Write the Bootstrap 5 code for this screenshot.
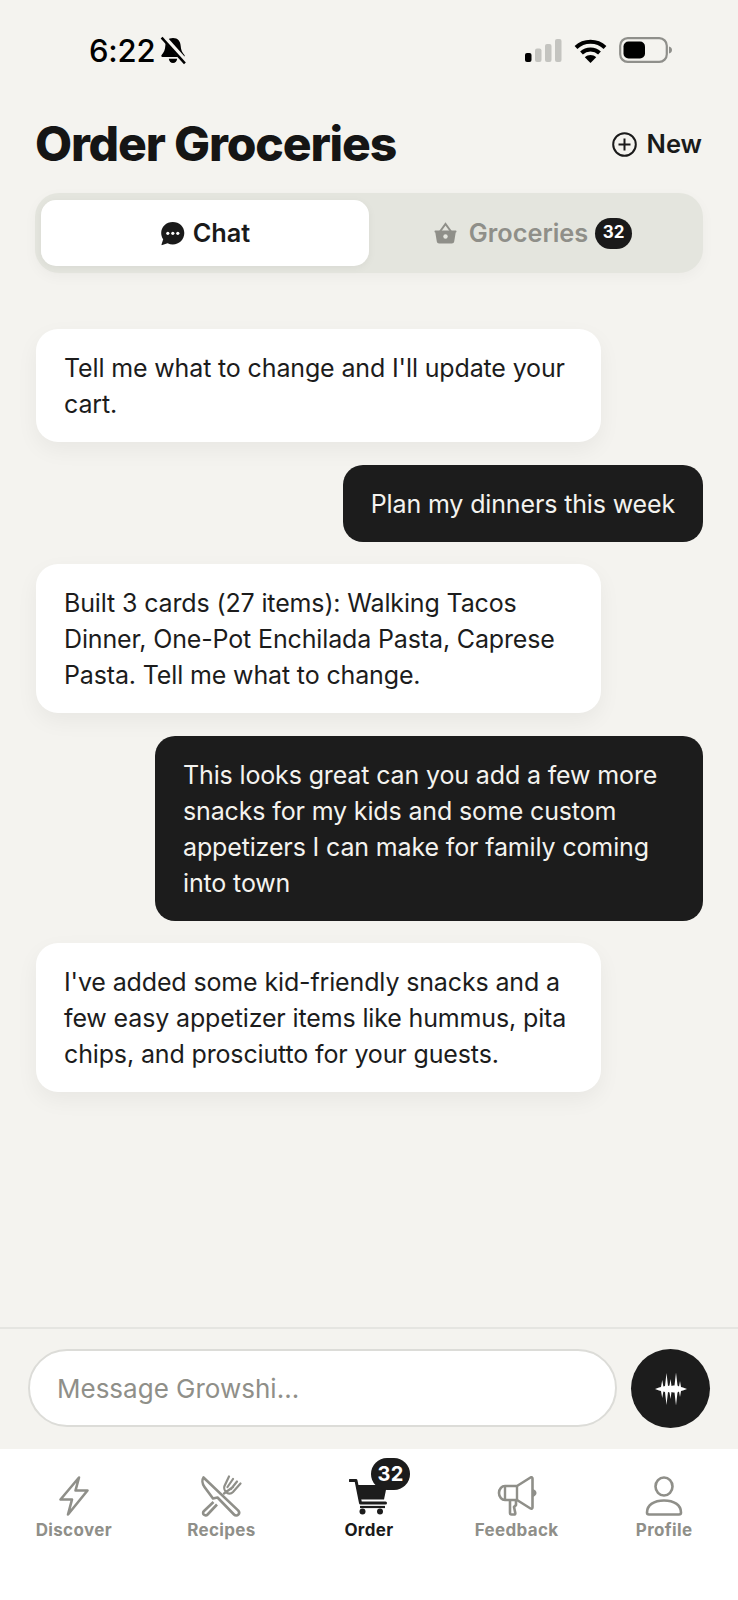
<!DOCTYPE html>
<html lang="en">
<head>
  <meta charset="UTF-8" />
  <meta name="viewport" content="width=device-width, initial-scale=1.0"/>
  <title>Order Groceries</title>
  <link href="https://cdn.jsdelivr.net/npm/bootstrap@5.3.0/dist/css/bootstrap.min.css" rel="stylesheet"/>
  <style>
    body {
      background: #f4f3ef;
      font-family: "Inter", "Liberation Sans", sans-serif;
      color: #1a1a1a;
      overflow: hidden;
    }
    .app-shell { width: 738px; height: 1600px; }

    .status-row { height: 100px; padding: 0 66px 0 89px; }
    .status-time { font-size: 31px; font-weight: 500; letter-spacing: -.2px; color: #000; line-height: 1; }
    .status-right { gap: 12px; }

    .head-row { height: 93px; padding: 0 36px 5px 35px; }
    .head-title { font-size: 48px; font-weight: 800; letter-spacing: -1.15px; margin: 0; color: #151515; }
    .new-btn { font-size: 25.5px; font-weight: 600; color: #1a1a1a; gap: 10px; padding: 0; border: 0; background: none; }

    .seg-wrap {
      margin: 0 35px; height: 80px; padding: 7px 6px;
      background: #e4e5de; border-radius: 24px;
      box-shadow: 0 4px 14px rgba(0,0,0,.035);
    }
    .seg-item { flex: 1 1 50%; font-size: 25.300px; font-weight: 600; gap: 8px; border-radius: 15px; color: #8f8f89; }
    .seg-item.is-on { background: #fff; color: #1a1a1a; box-shadow: 0 2px 8px rgba(0,0,0,.05); }
    .seg-count {
      background: #1a1a1a; color: #fff; font-size: 17px; font-weight: 700;
      min-width: 37px; height: 31px; border-radius: 16px; margin-left: -1px;
    }

    .chat-list { padding: 56px 35px 0 36px; gap: 22.5px; }
    .msg { font-size: 25px; line-height: 36px; letter-spacing: -.14px; }
    .msg-bot { width: 565px; padding: 20.5px 28px; background: #fff; border-radius: 22px; color: #1c1c1c; box-shadow: 0 8px 22px rgba(0,0,0,.05); }
    .msg-user { max-width: 548px; padding: 21px 28px 20px; background: #1c1c1c; color: #f4f3ef; border-radius: 20px; }

    .composer { border-top: 2px solid #e5e5e1; height: 122px; padding: 20px 28px 0 28px; gap: 14px; }
    .msg-input {
      height: 78px; flex: 1 1 auto; border-radius: 39px; border: 2px solid #dcdcd8;
      background: #fff; font-size: 26px; padding: 0 27px; color: #1a1a1a; box-shadow: none;
    }
    .msg-input::placeholder { color: #8f8f89; opacity: 1; }
    .msg-input:focus { border-color: #dcdcd8; box-shadow: none; }
    .voice-btn { width: 79px; height: 79px; flex: 0 0 79px; background: #1c1c1c; padding: 0; border: 0; }

    .tab-row { height: 151px; background: #fff; padding-top: 22px; }
    .tab-item { flex: 0 0 20%; color: #8f8f89; font-size: 17px; font-weight: 700; letter-spacing: .35px; line-height: 1; }
    .tab-item.is-on { color: #1a1a1a; }
    .tab-icon { height: 50px; margin-bottom: 1px; }
    .tab-count {
      top: -13px; left: 50%; margin-left: 2px;
      background: #1c1c1c; color: #fff; font-size: 20px; font-weight: 700;
      width: 39px; height: 32px; border-radius: 16px;
    }
  </style>
</head>

<body>
  <div class="app-shell d-flex flex-column">

    <!-- status bar -->
    <div class="status-row d-flex align-items-center justify-content-between flex-shrink-0">
      <div class="d-flex align-items-center gap-1">
        <span class="status-time">6:22</span>
        <svg width="28" height="29" viewBox="0 0 26 28">
          <path d="M13 2c-4.800 0-7.200 3.400-7.400 7.500-.2 4-1.400 6.600-3.600 8.900-.6.700-.2 1.800.7 1.800h20.600c.9 0 1.300-1.100.7-1.800-2.200-2.300-3.400-4.900-3.600-8.900C20.200 5.400 17.800 2 13 2z" fill="#000"/>
          <path d="M9 22h8a4 4 0 0 1-8 0z" fill="#000"/>
          <path d="M3.500 .5 25 24.500" stroke="#f4f3ef" stroke-width="5"/>
          <path d="M2 1.500 24.500 26.500" stroke="#000" stroke-width="2.400"/>
        </svg>
      </div>
      <div class="status-right d-flex align-items-center">
        <svg width="38" height="24" viewBox="0 0 38 24">
          <rect x="1" y="15" width="6.500" height="9" rx="2" fill="#000"/>
          <rect x="11" y="10.500" width="6.500" height="13.500" rx="2" fill="#c4c4c0"/>
          <rect x="21" y="6" width="6.500" height="18" rx="2" fill="#c4c4c0"/>
          <rect x="31" y="1" width="6.500" height="23" rx="2" fill="#c4c4c0"/>
        </svg>
        <svg width="33" height="25" viewBox="0 0 33 25">
          <path d="M2 9.500C10 1.800 23 1.800 31 9.500" fill="none" stroke="#000" stroke-width="4"/>
          <path d="M7.500 15C12.500 10.300 20.500 10.300 25.500 15" fill="none" stroke="#000" stroke-width="4"/>
          <path d="M16.500 25 10.800 19.300C14 16.200 19 16.200 22.200 19.300z" fill="#000"/>
        </svg>
        <svg width="53" height="26" viewBox="0 0 53 26">
          <rect x="1.200" y="1.200" width="46.600" height="23.600" rx="7.500" fill="none" stroke="#8f8f8b" stroke-width="2.200"/>
          <rect x="4.500" y="4.500" width="21.500" height="17" rx="5" fill="#000"/>
          <path d="M50 9.500c1.800.5 3 1.800 3 3.500s-1.200 3-3 3.500z" fill="#8f8f8b"/>
        </svg>
      </div>
    </div>

    <!-- header -->
    <div class="head-row d-flex align-items-center justify-content-between flex-shrink-0">
      <h1 class="head-title">Order Groceries</h1>
      <button class="new-btn btn d-flex align-items-center" type="button">
        <svg width="25" height="25" viewBox="0 0 25 25">
          <circle cx="12.500" cy="12.500" r="11.300" fill="none" stroke="#1a1a1a" stroke-width="2"/>
          <path d="M12.500 6.500v12M6.500 12.500h12" stroke="#1a1a1a" stroke-width="2"/>
        </svg>
        New
      </button>
    </div>

    <!-- chat / groceries switch -->
    <div class="seg-wrap d-flex flex-shrink-0">
      <div class="seg-item is-on d-flex align-items-center justify-content-center">
        <svg width="25" height="25" viewBox="0 0 25 25">
          <path d="M12.800 1C6.300 1 1.200 5.800 1.200 12c0 2.400.7 4.500 2 6.300L1.500 23.500c-.1.500.3.800.8.600l5.300-1.800c1.600.8 3.300 1.200 5.200 1.200 6.400 0 11.500-5 11.500-11.500S19.200 1 12.800 1z" fill="#1a1a1a"/>
          <circle cx="7.800" cy="12.300" r="1.600" fill="#fff"/>
          <circle cx="12.800" cy="12.300" r="1.600" fill="#fff"/>
          <circle cx="17.800" cy="12.300" r="1.600" fill="#fff"/>
        </svg>
        Chat
      </div>
      <div class="seg-item d-flex align-items-center justify-content-center">
        <svg class="me-1" width="23" height="22" viewBox="0 0 23 22">
          <path d="M6 9.500 11.500 2 17 9.500" fill="none" stroke="#8f8f89" stroke-width="2"/>
          <path d="M.5 9.500c0-.6.400-1 1-1h20c.6 0 1 .4 1 1 0 .5-.3.900-.8 1l-1.500 9c-.2 1.200-1.100 2-2.300 2H5.100c-1.200 0-2.100-.8-2.300-2l-1.500-9c-.5-.1-.8-.5-.8-1z" fill="#8f8f89"/>
          <circle cx="11.500" cy="14.500" r="2.200" fill="#e4e5de"/>
        </svg>
        Groceries
        <span class="seg-count d-inline-flex align-items-center justify-content-center">32</span>
      </div>
    </div>

    <!-- messages -->
    <div class="chat-list d-flex flex-column flex-grow-1">
      <div class="msg msg-bot align-self-start">Tell me what to change and I'll update your cart.</div>
      <div class="msg msg-user align-self-end">Plan my dinners this week</div>
      <div class="msg msg-bot align-self-start">Built 3 cards (27 items): Walking Tacos Dinner, One-Pot Enchilada Pasta, Caprese Pasta. Tell me what to change.</div>
      <div class="msg msg-user align-self-end">This looks great can you add a few more snacks for my kids and some custom appetizers I can make for family coming into town</div>
      <div class="msg msg-bot align-self-start">I've added some kid-friendly snacks and a few easy appetizer items like hummus, pita chips, and prosciutto for your guests.</div>
    </div>

    <!-- composer -->
    <div class="composer d-flex flex-shrink-0">
      <input class="msg-input form-control" type="text" placeholder="Message Growshi..." />
      <button class="voice-btn btn rounded-circle d-flex align-items-center justify-content-center" type="button" aria-label="Voice">
        <svg width="32" height="34" viewBox="0 0 32 34">
          <polygon fill="#fff" points="0,17 4,15.500 6,15 7.200,8 8.400,14.500 10,14 11.500,1 13,14 14.500,13.500 15.500,7 16.500,14 18,13.500 19.500,13.500 21,.5 22.500,13.500 24,14.500 25,9 26,15 28,15.500 32,17 28,18.500 26,19 25,25 24,19.500 22.500,20.500 21,33.500 19.500,20.500 18,20.500 16.500,20 15.500,27 14.500,20.500 13,20 11.500,33 10,20 8.400,19.500 7.200,26 6,19 4,18.500"/>
        </svg>
      </button>
    </div>

    <!-- bottom tabs -->
    <nav class="tab-row d-flex flex-shrink-0">
      <div class="tab-item d-flex flex-column align-items-center">
        <div class="tab-icon d-flex align-items-center">
          <svg width="32" height="42" viewBox="0 0 32 42">
            <path d="M21 2.500 2.500 24.500H14L10 39.500 29.500 15.500H17.500L21 2.500z" fill="none" stroke="#8f8f89" stroke-width="2.600" stroke-linejoin="round"/>
          </svg>
        </div>
        Discover
      </div>
      <div class="tab-item d-flex flex-column align-items-center">
        <div class="tab-icon d-flex align-items-center">
          <svg width="42" height="42" viewBox="0 0 42 42">
            <path d="M3.500 2.500C2 4.500 2 8.500 4.500 12L13 23.500l4.500-1 16.500 17c1.300 1.300 3.200 1.300 4.300.1 1.100-1.100 1-2.800 0-4L3.500 2.500z" fill="none" stroke="#8f8f89" stroke-width="2.600" stroke-linejoin="round"/>
            <path d="M13.500 27 4 36c-1.200 1.200-1.200 2.800-.1 3.700 1 1 2.600.9 3.700-.2L17 29.500" fill="none" stroke="#8f8f89" stroke-width="2.600" stroke-linejoin="round"/>
            <path d="M24 18.500 33 12M29 1.500 24.500 11c-.8 2 .2 5 2 6.500 2.300 1.500 5 1 6.500-.5L40.500 8.500M33 4l-5.500 8M37 6.500l-6 7.500" fill="none" stroke="#8f8f89" stroke-width="2.200" stroke-linecap="round"/>
          </svg>
        </div>
        Recipes
      </div>
      <div class="tab-item is-on d-flex flex-column align-items-center">
        <div class="tab-icon d-flex align-items-center position-relative">
          <svg width="40" height="38" viewBox="0 0 40 38">
            <path d="M1 3.500h6l4.500 22.500h25" fill="none" stroke="#1c1c1c" stroke-width="3" stroke-linecap="round" stroke-linejoin="round"/>
            <path d="M8 8h30l-3 14.500H11z" fill="#1c1c1c"/>
            <path d="M11 30h25" stroke="#1c1c1c" stroke-width="2.200"/>
            <circle cx="13.500" cy="34.500" r="3" fill="#1c1c1c"/>
            <circle cx="31" cy="34.500" r="3" fill="#1c1c1c"/>
          </svg>
          <span class="tab-count position-absolute d-flex align-items-center justify-content-center">32</span>
        </div>
        Order
      </div>
      <div class="tab-item d-flex flex-column align-items-center">
        <div class="tab-icon d-flex align-items-center">
          <svg width="40" height="40" viewBox="0 0 40 40">
            <path d="M8 10h12L33.500 1.500c1-.6 2-.1 2 1.200v28.600c0 1.300-1 1.800-2 1.200L20 24H8c-3 0-6-2.500-6-7s3-7 6-7z" fill="none" stroke="#8f8f89" stroke-width="2.600" stroke-linejoin="round"/>
            <path d="M20 10v14M8 10v14" stroke="#8f8f89" stroke-width="2.400"/>
            <path d="M13 24v13c0 1 .6 1.500 1.500 1.500H17c1 0 1.500-.6 1.300-1.500L17 31l2-2v-5" fill="none" stroke="#8f8f89" stroke-width="2.600" stroke-linejoin="round"/>
            <path d="M36 13c2 .8 3.500 2.200 3.500 4s-1.500 3.200-3.500 4z" fill="#8f8f89"/>
          </svg>
        </div>
        Feedback
      </div>
      <div class="tab-item d-flex flex-column align-items-center">
        <div class="tab-icon d-flex align-items-center">
          <svg width="38" height="40" viewBox="0 0 38 40">
            <ellipse cx="19" cy="10.500" rx="8.500" ry="9" fill="none" stroke="#8f8f89" stroke-width="2.600"/>
            <path d="M2 36.500C2 29 9 24.500 19 24.500S36 29 36 36.500c0 1.200-.8 2-2 2H4c-1.200 0-2-.8-2-2z" fill="none" stroke="#8f8f89" stroke-width="2.600" stroke-linejoin="round"/>
          </svg>
        </div>
        Profile
      </div>
    </nav>

  </div>
  <script src="https://cdn.jsdelivr.net/npm/bootstrap@5.3.0/dist/js/bootstrap.bundle.min.js"></script>
</body>
</html>
